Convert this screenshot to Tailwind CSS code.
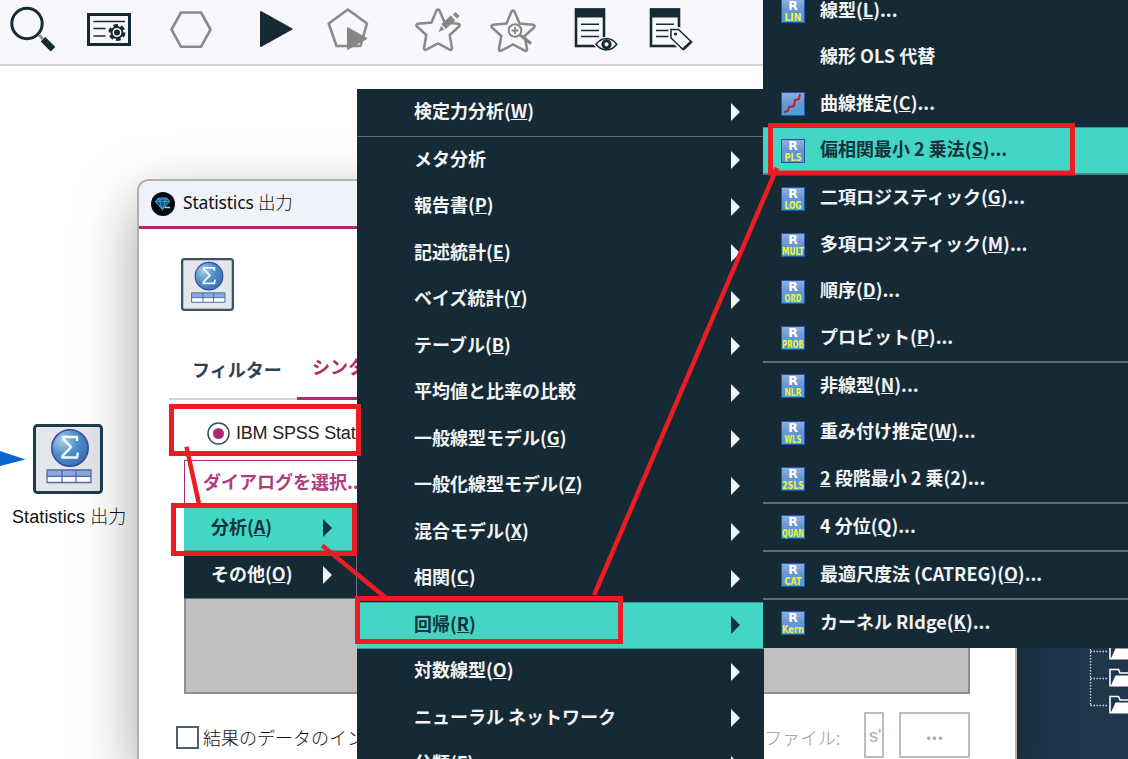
<!DOCTYPE html>
<html lang="ja">
<head>
  <meta charset="UTF-8">
  <meta name="viewport" content="width=device-width, initial-scale=1.0">
  <title>Statistics 出力</title>
  <script src="https://cdn.jsdelivr.net/npm/@tailwindcss/browser@4"></script>
</head>
<body class="relative w-[1128px] h-[759px] overflow-hidden bg-white font-['Noto_Sans_CJK_JP',sans-serif] text-[18px] leading-none whitespace-nowrap">

  <!-- Shared symbols -->
  <svg class="absolute size-0">
    <defs>
      <radialGradient id="ball" cx="30%" cy="30%" r="80%">
        <stop offset="0" stop-color="#a9d0ea"/>
        <stop offset=".5" stop-color="#4f8fc9"/>
        <stop offset="1" stop-color="#3a6fb4"/>
      </radialGradient>
      <linearGradient id="tile" x1="0" y1="0" x2="0" y2="1">
        <stop offset="0" stop-color="#8fb0e2"/>
        <stop offset=".45" stop-color="#6c95d3"/>
        <stop offset="1" stop-color="#3fa3db"/>
      </linearGradient>
      <symbol id="stats" viewBox="0 0 70 70">
        <rect x="1.5" y="1.5" width="67" height="67" rx="3" fill="#e3e7eb" stroke="currentColor" stroke-width="3"/>
        <circle cx="37" cy="24" r="18.2" fill="url(#ball)" stroke="#3a4aa8" stroke-width="1.6"/>
        <path d="M44 17v-4H30v1.500L38 23l-8.500 9v1.500H44l1-5" fill="none" stroke="#f4f8fc" stroke-width="2.400"/>
        <rect x="14" y="46" width="44" height="6" fill="#8aa9dc"/>
        <rect x="14" y="52" width="44" height="6.500" fill="#fff"/>
        <path d="M14 46h44v12.500H14zM14 52.300h44M29 46v12.500M43 46v12.500" fill="none" stroke="#4a6ea8" stroke-width="1.300"/>
      </symbol>
      <symbol id="star" viewBox="0 0 48 44">
        <path d="M24 2.500c.8 0 1.300.6 1.600 1.300l5 11.700 13.300 1.300c1.800.2 2.300 1.700 1.100 2.700l-9.300 8.500 2.300 13c.2 1.600-1 2.300-2.300 1.600L24 36.500l-11.700 6.100c-1.300.7-2.500 0-2.300-1.600l2.300-13L3 19.500c-1.200-1-.7-2.500 1.100-2.700l13.300-1.300 5-11.700c.3-.7.8-1.300 1.600-1.300z" fill="none" stroke="#8a8a8a" stroke-width="2.500"/>
      </symbol>
    </defs>
  </svg>

  <!-- Toolbar -->
  <header class="h-[66px] bg-[#f8f8fc] border-b-2 border-[#cfcfd2] flex items-start text-[#162a35]">
    <svg class="w-[50px] h-[60px] ml-2" viewBox="8 0 50 60">
      <circle cx="27" cy="23.500" r="15.200" fill="none" stroke="currentColor" stroke-width="3"/>
      <path d="M39 35l4 4" stroke="#8a9299" stroke-width="3"/>
      <path d="M43 39.200l10 10" stroke="currentColor" stroke-width="6.500"/>
    </svg>
    <svg class="w-[46px] h-[60px] ml-7" viewBox="86 0 46 60">
      <rect x="88.500" y="14.500" width="41" height="30" fill="none" stroke="currentColor" stroke-width="3"/>
      <path d="M93.500 21.500H125M93.500 28.500h12M93.500 36h12" stroke="currentColor" stroke-width="1.400"/>
      <circle cx="117" cy="32.500" r="7" fill="none" stroke="currentColor" stroke-width="3" stroke-dasharray="4.400 2.930"/>
      <circle cx="117" cy="32.500" r="5.500" fill="#f8f8fc" stroke="currentColor" stroke-width="2"/>
      <circle cx="117" cy="32.500" r="3" fill="currentColor"/>
    </svg>
    <svg class="w-[46px] h-[60px] ml-9" viewBox="168 0 46 60">
      <path d="M171.500 29.500l9.500-17h20l9.500 17-9.500 17.300h-20z" fill="none" stroke="#8a8a8a" stroke-width="2.600" stroke-linejoin="round"/>
    </svg>
    <svg class="w-[36px] h-[60px] ml-11" viewBox="258 0 36 60">
      <path d="M261 12v34l30.500-17z" fill="currentColor" stroke="currentColor" stroke-width="2" stroke-linejoin="round"/>
    </svg>
    <svg class="w-[44px] h-[60px] ml-8" viewBox="326 0 44 60">
      <path d="M347.800 9.500l19.200 14-6.500 22.500h-24l-7.800-22.500z" fill="none" stroke="#8a8a8a" stroke-width="2.600" stroke-linejoin="round"/>
      <path d="M347.500 27.500v22l19.500-11z" fill="#868686" stroke="#868686" stroke-linejoin="round"/>
    </svg>
    <svg class="w-[48px] h-[60px] ml-[44px]" viewBox="414 0 48 60">
      <use href="#star" x="414" y="6" width="48" height="46"/>
      <path d="M438.500 32l2.500-6 3.500 3.500z" fill="#868686"/>
      <path d="M443.500 26.500l9.500-8.500" stroke="#868686" stroke-width="6.500"/>
      <path d="M455 16.500l2.500-2.500" stroke="#868686" stroke-width="6"/>
    </svg>
    <svg class="w-[48px] h-[60px] ml-[27px]" viewBox="489 0 48 60">
      <use href="#star" x="489" y="7" width="48" height="46"/>
      <circle cx="515" cy="30.500" r="6.300" fill="#f8f8fc" stroke="#868686" stroke-width="2"/>
      <path d="M515 27v7M511.500 30.500h7" stroke="#868686" stroke-width="1.800"/>
      <path d="M520 35l11 8.500" stroke="#868686" stroke-width="3"/>
    </svg>
    <svg class="w-[46px] h-[60px] ml-[36px]" viewBox="573 0 46 60">
      <rect x="576" y="9.500" width="28" height="36.500" fill="none" stroke="currentColor" stroke-width="2.600"/>
      <path d="M575 8.500h30v9h-30z" fill="currentColor"/>
      <path d="M581 24.300h18M581 30.500h18M581 36.500h18" stroke="currentColor" stroke-width="1.500"/>
      <path d="M595.500 44.500c6-8.500 16-8.500 21.500 0-5.500 7.500-15.500 7.500-21.500 0z" fill="#f8f8fc" stroke="#f8f8fc" stroke-width="3"/>
      <path d="M596 44.300c6-7.800 15-7.800 20.800 0-5.800 7.500-14.800 7.500-20.800 0z" fill="#f8f8fc" stroke="currentColor" stroke-width="1.500"/>
      <circle cx="606.500" cy="44.300" r="3.600" fill="#f8f8fc" stroke="currentColor" stroke-width="3"/>
    </svg>
    <svg class="w-[46px] h-[60px] ml-[29px]" viewBox="648 0 46 60">
      <rect x="651" y="9.500" width="28" height="36.500" fill="none" stroke="currentColor" stroke-width="2.600"/>
      <path d="M650 8.500h30v9h-30z" fill="currentColor"/>
      <path d="M656 24.300h18M656 30.500h14M656 36.500h14" stroke="currentColor" stroke-width="1.500"/>
      <path d="M671 29.500h7.500l13 12.500-8.500 7.500L671 38z" fill="#f8f8fc" stroke="#f8f8fc" stroke-width="5"/>
      <path d="M671 29.500h7.500l13 12.500-8.500 7.500L671 38z" fill="#f8f8fc" stroke="currentColor" stroke-width="1.500"/>
      <path d="M691.500 41.500l-8.500 8" stroke="currentColor" stroke-width="2.800"/>
      <circle cx="675.500" cy="34" r="1.600" fill="currentColor"/>
    </svg>
  </header>

  <!-- Node palette behind the dialog -->
  <aside class="absolute left-[1016px] top-[640px] w-28 h-[119px] bg-[#1f364b]">
    <svg class="size-full" viewBox="1016 640 112 119">
      <path d="M1090.500 640v65M1090.500 651.500h18M1090.500 678.500h18M1090.500 705.500h18" fill="none" stroke="#d5dade" stroke-width="1.300" stroke-dasharray="1.500 1.500"/>
      <g fill="#fff">
        <path id="folder" d="M1110 686.500v-17h8.500l1.500 3.500h9" fill="none" stroke="#fff" stroke-width="1.600"/>
        <path id="flap" d="M1115.500 675.500h13V686.500h-18z"/>
        <use href="#folder" y="27"/><use href="#flap" y="27"/>
        <use href="#folder" y="-27"/><use href="#flap" y="-27"/>
      </g>
    </svg>
  </aside>

  <!-- Canvas node -->
  <svg class="absolute left-0 top-[450px] w-[26px] h-[18px]" viewBox="0 0 26 18"><path d="M0 1l25.500 8.500L0 16z" fill="#0a66cc"/></svg>
  <div class="absolute left-[33px] top-[424px] text-[#1f3c4c]"><svg class="size-[70px]"><use href="#stats"/></svg></div>

  <!-- Dialog -->
  <section class="absolute left-[137px] top-[179px] w-[880px] h-[580px] bg-white border-2 border-b-0 border-[#b0b0b0] rounded-t-xl shadow-[0_22px_60px_0_rgba(0,0,0,0.36)] overflow-hidden">
    <div class="h-[45px] bg-[#eef3fa] flex items-center gap-2 pl-3 font-['Noto_Sans','Noto_Sans_CJK_JP',sans-serif] text-[17.500px] text-[#111]">
      <svg class="size-6" viewBox="0 0 24 24">
        <circle cx="12" cy="12" r="12" fill="#05080c"/>
        <path d="M7.500 6h8l3 3.500-7 8-7-8z" fill="#124a75"/>
        <path d="M7.500 6h8l3 3.500-7 8-7-8zM4.500 9.500h14M7.500 6l4 11.500 4-11.500M7.500 9.500L11.500 6l4 3.500" fill="none" stroke="#2f9bd3" stroke-width="1.100"/>
        <path d="M14 15.500h5" stroke="#c9d0d4" stroke-width="1.500"/>
      </svg>
      <span class="tracking-[-0.200px] pb-px">Statistics <span class="font-light">出力</span></span>
    </div>
    <div class="h-[3px] bg-[#b02a73]"></div>

    <div class="pt-[29px] pl-[42px] text-[#3c5464]"><svg class="size-[53px]"><use href="#stats"/></svg></div>

    <div class="flex ml-[30px] mt-[33px] h-[56px] font-bold border-b-2 border-[#d3d3d3]">
      <div class="pl-[23px] w-[128px] pt-[16px] text-[#2c4354]">フィルター</div>
      <div class="pl-[15px] pt-[13px] w-[130px] h-[56px] border-b-3 border-[#b02a73] text-[#b02a73]">シンタックス</div>
    </div>

    <div class="flex items-center gap-1.5 pl-[68px] h-[60px] pt-[6px] font-['Liberation_Sans',sans-serif] text-[18px] tracking-[-0.200px] text-[#222]">
      <svg class="size-[23px]" viewBox="0 0 23 23"><circle cx="11.500" cy="11.500" r="10.500" fill="#fff" stroke="#3a4f5e" stroke-width="1.500"/><circle cx="11.500" cy="11.500" r="5.500" fill="#b02a73"/></svg>
      <span>IBM SPSS Statistics</span>
    </div>

    <div class="ml-[45px] w-[786px] h-[234px] bg-[#c0c0c0] border-2 border-[#8e8e8e] border-t-0">
      <div class="-ml-0.5 w-[220px] h-[44px] bg-white border border-b-0 border-[#b02a73] pl-[18px] pt-[11px] font-bold text-[#b23c82]">ダイアログを選択...</div>
      <div id="rootMenu" class="-ml-0.5 w-[173px] bg-[#162a35] border-b border-r border-[#6b7277] font-bold"></div>
    </div>

    <div class="flex items-center mt-[17px] h-[52px] pl-[37px] font-light">
      <div class="size-[23px] border-2 border-[#4c6070]"></div>
      <div class="ml-[4px] w-[561px] overflow-hidden py-1 text-[#111]">結果のデータのインポート</div>
      <div class="w-[100px] py-1 text-[#999]">ファイル:</div>
      <div class="w-[20px] h-[46px] -mt-1 border-2 border-[#bdbdbd] pl-[3px] pt-[13px] overflow-hidden font-['Liberation_Sans',sans-serif] text-[#aaa]">s'</div>
      <div class="w-[71px] h-[46px] -mt-1 ml-[15px] border-2 border-[#bdbdbd] text-center pt-[9px] font-bold text-[#aaa]">...</div>
    </div>
  </section>

  <div class="absolute left-3 top-[508px] font-['Liberation_Sans','Noto_Sans_CJK_JP',sans-serif] text-[18px] tracking-[0.100px] text-[#111]">Statistics <span class="font-light">出力</span></div>

  <!-- Analyze menu -->
  <nav id="analyzeMenu" class="absolute left-[357px] top-[89px] w-[406.500px] h-[670px] overflow-hidden bg-[#162a35] font-bold"></nav>

  <!-- Regression submenu -->
  <nav class="absolute left-[763px] top-0 w-[365px] h-[648px] overflow-hidden bg-[#162a35] font-bold">
    <div id="regressionMenu" class="-mt-[12.500px]"></div>
  </nav>

  <!-- Step annotations -->
  <svg class="absolute inset-0 w-[1128px] h-[759px]" viewBox="0 0 1128 759" fill="none" stroke="#ed1c24">
    <g stroke-width="5">
      <path d="M171.500 406.500h187v47h-187zM173.500 505.500h181v48h-181zM357.500 598.500h263v43h-263zM770.500 125.500h302v47.500h-302z"/>
    </g>
    <path d="M187 449l12 55M324 547l62 51M595 593l181-423" stroke-width="4.500" stroke-linecap="square"/>
  </svg>

  <script>
    var analyze = [
      { label: '検定力分析(<u>W</u>)', sep: true },
      { label: 'メタ分析' },
      { label: '報告書(<u>P</u>)' },
      { label: '記述統計(<u>E</u>)' },
      { label: 'ベイズ統計(<u>Y</u>)' },
      { label: 'テーブル(<u>B</u>)' },
      { label: '平均値と比率の比較' },
      { label: '一般線型モデル(<u>G</u>)' },
      { label: '一般化線型モデル(<u>Z</u>)' },
      { label: '混合モデル(<u>X</u>)' },
      { label: '相関(<u>C</u>)' },
      { label: '回帰(<u>R</u>)', active: true },
      { label: '対数線型(<u>O</u>)' },
      { label: 'ニューラル ネットワーク' },
      { label: '分類(<u>F</u>)' }
    ];
    var regression = [
      { icon: 'LIN', label: '線型(<u>L</u>)...' },
      { label: '線形 OLS 代替' },
      { icon: 'curve', label: '曲線推定(<u>C</u>)...' },
      { icon: 'PLS', label: '偏相関最小 2 乗法(<u>S</u>)...', active: true, sep: true },
      { icon: 'LOG', label: '二項ロジスティック(<u>G</u>)...' },
      { icon: 'MULT', label: '多項ロジスティック(<u>M</u>)...' },
      { icon: 'ORD', label: '順序(<u>D</u>)...' },
      { icon: 'PROB', label: 'プロビット(<u>P</u>)...', sep: true },
      { icon: 'NLR', label: '非線型(<u>N</u>)...' },
      { icon: 'WLS', label: '重み付け推定(<u>W</u>)...' },
      { icon: '2SLS', label: '<u>2</u> 段階最小 2 乗(2)...', sep: true },
      { icon: 'QUAN', label: '4 分位(<u>Q</u>)...', sep: true },
      { icon: 'CAT', label: '最適尺度法 (CATREG)(<u>O</u>)...', sep: true },
      { icon: 'Kern', label: 'カーネル RIdge(<u>K</u>)...' }
    ];

    var arrow = '<svg class="w-[9px] h-[18px]" viewBox="0 0 9 18"><path d="M0 0l9 9-9 9z" fill="currentColor"/></svg>';
    var separator = '<div class="h-[1.500px] bg-[#666b70]"></div>';

    function tone(item) {
      return item.active
        ? 'bg-[#42d7c4] text-[#15333c] border-y border-[#2f9f95]'
        : 'text-[#f2f4f5]';
    }

    function icon(name) {
      if (!name) return '';
      var body = name === 'curve'
        ? '<path d="M3 20l4-1 1-4 5-1 1-6 4-1 1-5" fill="none" stroke="#c0202c" stroke-width="2"/>'
        : '<text x="12" y="11.300" text-anchor="middle" font-size="12.500" fill="#fff">R</text>' +
          '<text x="12" y="21.500" text-anchor="middle" font-size="11" textLength="' + (name.length > 3 ? 22 : 17) +
          '" lengthAdjust="spacingAndGlyphs" fill="#eef23a">' + name + '</text>';
      return '<svg class="size-6" font-family="DejaVu Sans, sans-serif" viewBox="0 0 24 24">' +
        '<rect x=".5" y=".5" width="23" height="23" fill="url(#tile)" stroke="#2456a8"/>' + body + '</svg>';
    }

    document.getElementById('analyzeMenu').innerHTML = analyze.map(function (item) {
      return '<div class="flex items-center justify-between h-[46.500px] pl-[57px] pr-[24px] ' + tone(item) + '">' +
        '<span class="pb-[5px]">' + item.label + '</span>' + arrow + '</div>' + (item.sep ? separator : '');
    }).join('');

    document.getElementById('regressionMenu').innerHTML = regression.map(function (item) {
      return '<div class="flex items-center h-[46.500px] pl-[18px] ' + tone(item) + '">' +
        '<span class="w-[39px] pt-[1px]">' + icon(item.icon) + '</span>' +
        '<span class="pb-[4px]">' + item.label + '</span></div>' + (item.sep ? separator : '');
    }).join('');

    document.getElementById('rootMenu').innerHTML = [
      { label: '分析(<u>A</u>)', active: true },
      { label: 'その他(<u>O</u>)' }
    ].map(function (item) {
      return '<div class="flex items-center justify-between h-[47px] pl-[27px] pr-[24px] ' + tone(item) + '">' +
        '<span class="pb-[4px]">' + item.label + '</span>' + arrow + '</div>';
    }).join('');
  </script>
</body>
</html>
